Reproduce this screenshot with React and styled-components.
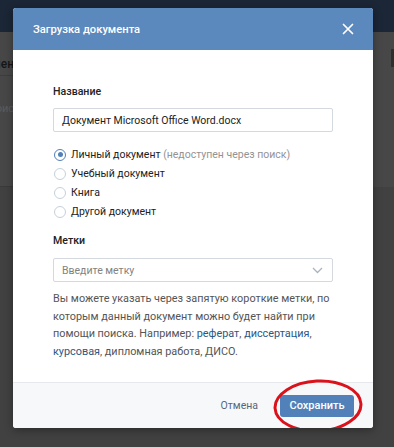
import React, { useState } from 'react';
import styled, { createGlobalStyle } from 'styled-components';

const GlobalStyle = createGlobalStyle`
    html, body {
        margin: 0;
        padding: 0;
        background: #414141;
    }
    body {
        font-family: Roboto, "Open Sans", "Liberation Sans", sans-serif;
        -webkit-font-smoothing: antialiased;
    }
`;

const Page = styled.div`
    position: relative;
    width: 394px;
    height: 447px;
    overflow: hidden;
    background: #414141;
`;

/* dimmed page behind the modal */
const TopBar = styled.div`
    height: 32px;
    background: #1b2636;
`;

const Behind = styled.div`
    display: flex;
    justify-content: space-between;
    height: 155px;
`;

const BehindCard = styled.div`
    width: 20px;
    background: #474747;
    border-bottom: 1px solid #3a3a3a;
    display: flex;
    flex-direction: column;
    overflow: hidden;
`;

const BehindTitle = styled.div`
    height: 44px;
    padding-top: 25px;
    box-sizing: border-box;
    font-size: 12px;
    line-height: 14px;
    font-weight: 500;
    color: #161616;
    white-space: nowrap;
    direction: rtl;
    border-bottom: 1px solid #3d3d3d;
`;

const BehindMuted = styled.div`
    padding-top: 26px;
    font-size: 11px;
    color: #5c5c5c;
    white-space: nowrap;
    direction: rtl;
`;

const BehindSide = styled.div`
    width: 21px;
    background: #474747;
    display: flex;
    justify-content: flex-end;
    padding-top: 17px;
    box-sizing: border-box;
`;

const SideTab = styled.div`
    width: 3px;
    height: 18px;
    background: #2e2e2e;
`;

/* modal */
const Modal = styled.div`
    position: absolute;
    left: 13px;
    top: 8px;
    width: 360px;
    height: 420px;
    background: #fff;
    border-radius: 3px;
    overflow: hidden;
    display: flex;
    flex-direction: column;
    box-shadow: 0 2px 8px rgba(0, 0, 0, 0.35);
`;

const Header = styled.div`
    height: 42px;
    flex-shrink: 0;
    background: #5b88bd;
    display: flex;
    align-items: center;
    justify-content: space-between;
    padding: 0 19px 0 20px;
`;

const Title = styled.div`
    color: #fff;
    font-size: 11.2px;
    font-weight: 500;
`;

const Close = styled.button`
    border: 0;
    padding: 0;
    background: none;
    width: 12px;
    height: 12px;
    display: flex;
    cursor: pointer;
`;

const Body = styled.div`
    flex: 1;
    padding: 35px 40px 0 40px;
`;

const Label = styled.div`
    font-size: 10.6px;
    line-height: 13px;
    font-weight: 500;
    color: #222;
    margin-bottom: ${p => p.$gap || 10}px;
`;

const Field = styled.div`
    height: 22px;
    border: 1px solid #d3d9de;
    border-radius: 2px;
    display: flex;
    align-items: center;
    justify-content: space-between;
    padding: 0 9px 0 8px;
    font-size: 10.5px;
    color: ${p => (p.$placeholder ? '#828282' : '#222')};
`;

const Radios = styled.div`
    display: flex;
    flex-direction: column;
    gap: 4px;
    margin: 15px 0 15px 1px;
`;

const RadioRow = styled.label`
    display: flex;
    align-items: center;
    gap: 5px;
    height: 15px;
    font-size: 10.5px;
    color: #222;
    cursor: pointer;
`;

const Circle = styled.span`
    width: 12px;
    height: 12px;
    border-radius: 50%;
    border: 1px solid ${p => (p.$on ? '#5181b8' : '#c5d0db')};
    display: flex;
    align-items: center;
    justify-content: center;
    box-sizing: border-box;

    &::after {
        content: '';
        width: 5px;
        height: 5px;
        border-radius: 50%;
        background: ${p => (p.$on ? '#5181b8' : 'transparent')};
    }
`;

const Muted = styled.span`
    color: #939393;
`;

const Help = styled.p`
    margin: 8px 0 0;
    font-size: 10.85px;
    line-height: 17.6px;
    color: #555;
`;

const Link = styled.a`
    color: #2a5885;
    text-decoration: none;
`;

const Footer = styled.div`
    height: 45px;
    flex-shrink: 0;
    border-top: 1px solid #e7e8ec;
    background: #f7f8fa;
    display: flex;
    align-items: center;
    justify-content: flex-end;
    gap: 22px;
    padding: 0 19px 0 0;
`;

const CancelButton = styled.button`
    border: 0;
    background: none;
    padding: 0;
    font-family: inherit;
    font-size: 10.5px;
    color: #55677d;
    cursor: pointer;
`;

const SaveWrap = styled.div`
    position: relative;
`;

const SaveButton = styled.button`
    display: block;
    width: 74px;
    height: 22px;
    border: 0;
    border-radius: 3px;
    background: #5181b8;
    color: #fff;
    font-family: inherit;
    font-size: 11px;
    font-weight: 500;
    cursor: pointer;
`;

/* hand-drawn red mark over the save button */
const Mark = styled.svg`
    position: absolute;
    left: -8px;
    top: -18px;
    pointer-events: none;
`;

const types = [
    { id: 'personal', text: 'Личный документ', note: '(недоступен через поиск)' },
    { id: 'study', text: 'Учебный документ' },
    { id: 'book', text: 'Книга' },
    { id: 'other', text: 'Другой документ' },
];

export default function App() {
    const [type, setType] = useState('personal');

    return (
        <Page>
            <GlobalStyle />
            <TopBar />
            <Behind>
                <BehindCard>
                    <BehindTitle>Документ</BehindTitle>
                    <BehindMuted>Поиск</BehindMuted>
                </BehindCard>
                <BehindSide>
                    <SideTab />
                </BehindSide>
            </Behind>

            <Modal>
                <Header>
                    <Title>Загрузка документа</Title>
                    <Close aria-label="Закрыть">
                        <svg width="12" height="12" viewBox="0 0 12 12">
                            <path d="M1.5 1.5l9 9M10.5 1.5l-9 9" stroke="#fff" strokeWidth="1.7" strokeLinecap="round" />
                        </svg>
                    </Close>
                </Header>

                <Body>
                    <Label>Название</Label>
                    <Field>Документ Microsoft Office Word.docx</Field>

                    <Radios>
                        {types.map(t => (
                            <RadioRow key={t.id} onClick={() => setType(t.id)}>
                                <Circle $on={type === t.id} />
                                <span>
                                    {t.text}
                                    {t.note && <Muted> {t.note}</Muted>}
                                </span>
                            </RadioRow>
                        ))}
                    </Radios>

                    <Label $gap={11}>Метки</Label>
                    <Field $placeholder>
                        Введите метку
                        <svg width="11" height="7" viewBox="0 0 11 7">
                            <path d="M1 1l4.5 4.5L10 1" fill="none" stroke="#aab4c0" strokeWidth="1.3" />
                        </svg>
                    </Field>

                    <Help>
                        Вы можете указать через запятую короткие метки, по которым данный документ можно
                        будет найти при помощи поиска. Например: <Link>реферат</Link>,{' '}
                        <Link>диссертация</Link>, <Link>курсовая</Link>, дипломная работа, ДИСО.
                    </Help>
                </Body>

                <Footer>
                    <CancelButton>Отмена</CancelButton>
                    <SaveWrap>
                        <SaveButton>Сохранить</SaveButton>
                        <Mark width="94" height="58" viewBox="0 0 94 58">
                            <ellipse cx="46" cy="29" rx="43" ry="25" fill="none" stroke="#d9121b" strokeWidth="3" transform="rotate(-3 46 29)" />
                        </Mark>
                    </SaveWrap>
                </Footer>
            </Modal>
        </Page>
    );
}
